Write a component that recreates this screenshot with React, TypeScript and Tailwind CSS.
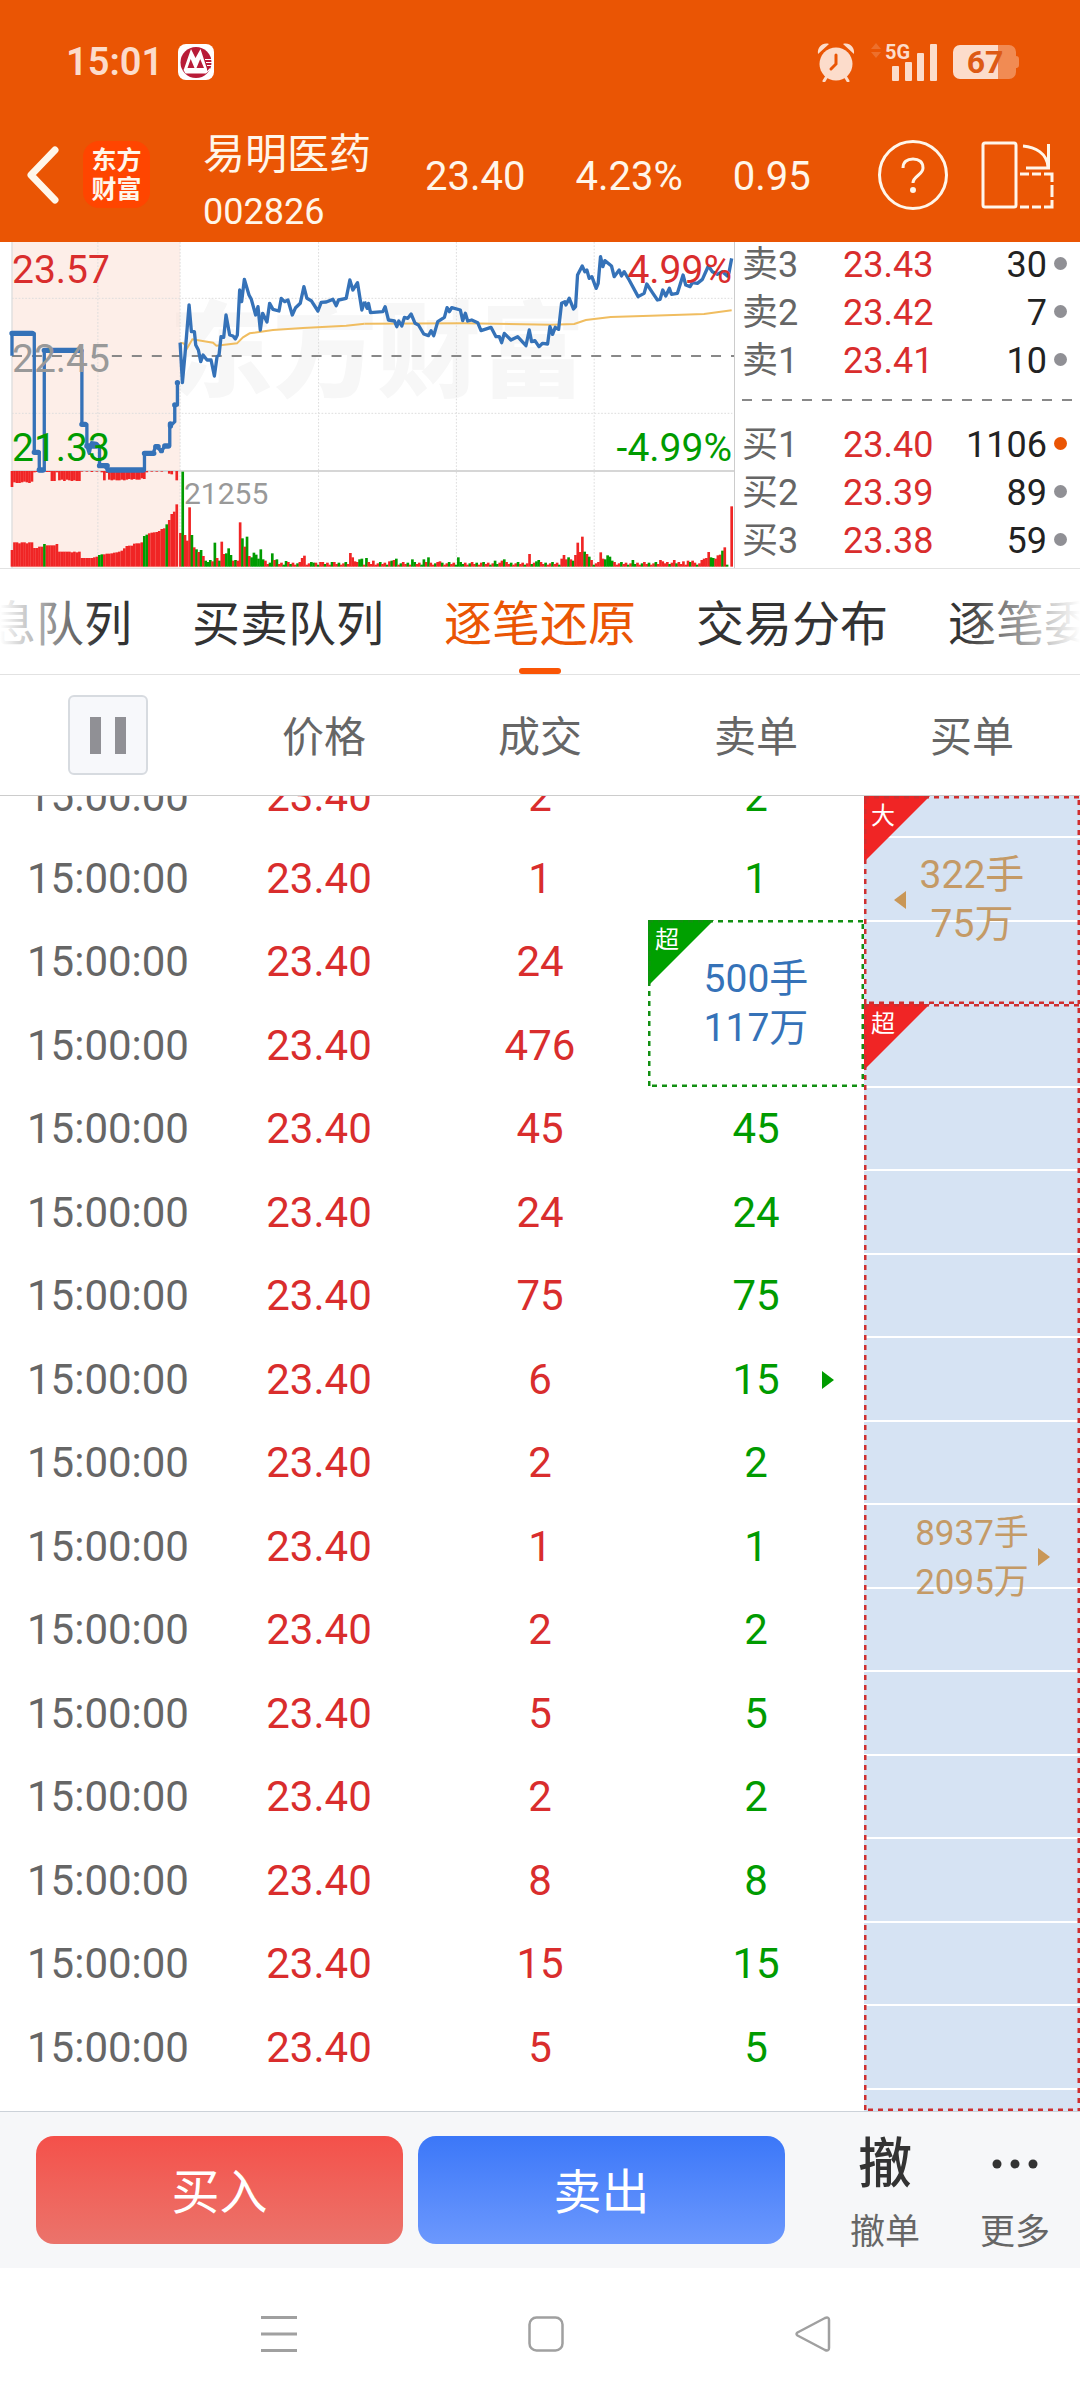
import React from 'react';

type Trade = { deal: number; sell?: number; arrow?: boolean };

const asks = [
    { label: '卖3', price: '23.43', qty: 30 },
    { label: '卖2', price: '23.42', qty: 7 },
    { label: '卖1', price: '23.41', qty: 10 },
];

const bids = [
    { label: '买1', price: '23.40', qty: 1106, hot: true },
    { label: '买2', price: '23.39', qty: 89 },
    { label: '买3', price: '23.38', qty: 59 },
];

const tabs = ['消息队列', '买卖队列', '逐笔还原', '交易分布', '逐笔委托'];

const trades: Trade[] = [
    { deal: 1, sell: 1 },
    { deal: 24 },
    { deal: 476 },
    { deal: 45, sell: 45 },
    { deal: 24, sell: 24 },
    { deal: 75, sell: 75 },
    { deal: 6, sell: 15, arrow: true },
    { deal: 2, sell: 2 },
    { deal: 1, sell: 1 },
    { deal: 2, sell: 2 },
    { deal: 5, sell: 5 },
    { deal: 2, sell: 2 },
    { deal: 8, sell: 8 },
    { deal: 15, sell: 15 },
    { deal: 5, sell: 5 },
];

// Call auction volume, negative values are falling ticks
const auctionVolume = [
    50, 73, 73, 70, 73, 73, 70, 73, 73, 56, 56, 60, 60, -68, 64, 64, 64, 64, 68, 45, 45, 45, 45, 45, 43,
    45, 43, 45, 26, 26, 26, 26, 26, 28, 30, -35, -37, 37, 39, 39, 40, 42, 43, 45, 48, 55, 62, 63, 63, 69,
    70, 70, 73, -92, -96, 100, 102, 103, 104, 107, 113, 115, -127, 140, 158, 165, 187,
];

const auctionUnmatched = [
    48, 34, 36, 36, 34, 32, 34, 36, 32, 4, 3, 0, 3, 0, 3, 3, 30, 30, 4, 28, 26, 30, 26, 28, 30, 28, 30,
    30, 2, 0, 2, 0, 3, 0, 2, 0, 4, 28, 6, 26, 28, 26, 28, 28, 26, 28, 26, 24, 26, 24, 26, 26, 22, 24, 4,
    0, 2, 0, 2, 0, 2, 0, 0, 8, 10, 0, 28,
];

const minuteVolume: Record<number, number> = {
    0: 101, 1: -285, 2: 95, 3: 78, 4: 178, 5: -95, 6: 58, 7: -52, 8: 44, 9: -50, 10: 32, 11: -18, 13: -20,
    14: 16, 15: -72, 16: 26, 17: -18, 18: 75, 19: 38, 20: -40, 21: -55, 22: -35, 23: 18, 24: -20, 25: 18,
    26: 133, 27: -85, 28: 60, 29: -90, 30: 32, 31: -28, 32: -42, 33: -36, 34: -24, 35: -52, 36: -22, 37: 18,
    40: -40, 41: 20, 42: -22, 46: -17, 53: 26, 54: 33, 58: -12, 61: 14, 66: -14, 74: 41, 75: 28, 76: 16,
    78: -22, 79: -24, 81: -26, 84: 18, 91: 16, 92: -18, 93: 20, 94: -24, 101: -22, 106: -22, 108: -28,
    113: 16, 121: -28, 122: -14, 131: 12, 137: -18, 140: 18, 141: -22, 152: 38, 155: -16, 156: -20,
    166: 24, 167: 35, 168: 22, 169: -28, 170: 22, 171: -18, 172: 35, 173: 72, 174: 44, 175: 90, 176: -45,
    177: 38, 178: -30, 179: 20, 183: 43, 184: 24, 185: -22, 186: -34, 187: -30, 188: -18, 189: 14,
    197: -20, 209: 20, 210: 16, 215: 20, 219: 16, 221: 18, 223: 18, 227: 20, 228: 24, 229: 26, 230: 44,
    231: -28, 232: -26, 233: 24, 234: 34, 235: 36, 236: -48, 237: 58, 238: -6, 239: 0, 240: 181,
};

const auctionLine =
    '36,347 36,280 103,280 103,637 118,637 118,692 133,692 133,331 246,331 246,553 261,553 261,618 268,640 275,608 290,610 299,620 299,677 315,680 325,690 434,690 434,640 460,640 468,618 485,634 495,618 510,618 510,560 525,545 525,495 533,495 533,428';
const morningLine =
    '541,308 548,428 556,340 568,195 575,275 584,275 588,315 596,330 603,365 610,345 622,360 634,360 644,408 652,350 658,345 664,290 672,292 679,225 690,285 700,288 707,297 713,285 720,150 726,185 734,118 748,165 755,178 768,225 775,200 782,270 789,220 802,246 810,190 820,208 838,213 845,175 855,185 865,180 878,225 888,203 902,190 913,140 922,175 935,182 955,213 965,187 980,186 1000,178 1010,197 1017,180 1040,175 1051,120 1060,150 1074,128 1087,210 1095,185';
const afternoonLine =
    '0,185 8,205 12,190 18,218 55,215 62,200 72,240 90,243 97,260 103,243 112,258 120,232 130,235 140,222 152,250 162,255 178,282 192,287 200,272 208,287 220,245 240,232 248,203 255,215 262,203 288,210 295,242 303,220 310,243 322,240 340,248 350,272 380,262 395,290 405,290 412,308 420,280 440,300 460,290 485,317 495,270 502,305 512,302 524,320 535,310 550,312 557,260 565,283 573,262 583,268 592,190 602,185 605,195 615,175 628,207 634,200 640,105 654,78 662,95 668,90 675,115 683,110 696,145 702,130 709,50 716,80 722,62 742,78 750,110 765,90 772,108 780,95 795,120 822,170 840,160 848,132 865,158 880,180 888,178 896,150 905,168 916,145 922,163 940,160 957,105 965,135 978,140 985,128 1000,130 1015,118 1033,78 1045,95 1060,103 1075,95 1090,108 1095,98 1103,55';

const tone = (v: number) => (v < 0 ? '#009b00' : '#f02525');

const StatusBar = () => (
    <div className="flex h-[124px] items-center pl-[66px] pr-[61px] text-[#fcdccb]">
        <span className="text-[38px] font-semibold">15:01</span>
        <svg className="ml-[15px] h-9 w-9" viewBox="0 0 36 36">
            <rect width="36" height="36" rx="8" fill="#fff" />
            <circle cx="18" cy="18.5" r="15.5" fill="#b81c38" />
            <path d="M6 25L13 5l4.500 9L22.500 5L29 25v2l3-3v2l-4 3.500H7.500L5.500 26z" fill="#fff" />
            <path d="M9.500 24l3.200-9 3.800 9zM18.500 24l3.700-9 3.800 9z" fill="#b81c38" />
            <path d="M27 15.500h7M28 18.500h6.500M29 21.500h5" stroke="#fff" strokeWidth="1.200" />
        </svg>
        <svg className="ml-auto h-10 w-[38px]" viewBox="0 0 38 40" fill="currentColor">
            <circle cx="19" cy="22" r="16.500" />
            <path d="M1 12C0 5 6 0 12 2z M37 12C38 5 32 0 26 2z" />
            <path d="M10 34l-3 5M28 34l3 5" stroke="currentColor" strokeWidth="3" strokeLinecap="round" />
            <path d="M19 13v9l-5 5" fill="none" stroke="#ea5504" strokeWidth="3" strokeLinecap="round" />
        </svg>
        <div className="relative ml-4 h-10 w-[66px]">
            <svg className="h-10 w-[66px]" viewBox="0 0 66 40" fill="currentColor">
                <path d="M5 1l5 6H0zM5 16l5-6H0z" opacity="0.2" />
                <rect x="21" y="24" width="7" height="15" rx="1" />
                <rect x="34" y="20" width="7" height="19" rx="1" />
                <rect x="46" y="11" width="7" height="28" rx="1" />
                <rect x="59" y="2" width="7" height="37" rx="1" />
            </svg>
            <span className="absolute left-[14px] top-0 text-[20px] leading-5 font-bold">5G</span>
        </div>
        <div className="relative ml-4 h-[34px] w-[66px]">
            <svg className="h-[34px] w-[66px]" viewBox="0 0 66 34" fill="#fcdccb">
                <path d="M45 0H56a7 7 0 0 1 7 7v4a3 3 0 0 1 3 3v6a3 3 0 0 1-3 3v4a7 7 0 0 1-7 7H45z" opacity="0.4" />
                <path d="M45 0H7a7 7 0 0 0-7 7v20a7 7 0 0 0 7 7h38z" />
            </svg>
            <span className="absolute inset-0 pr-0.5 text-center text-[32px] leading-[34px] font-bold text-[#dd5a15]">67</span>
        </div>
    </div>
);

const TitleBar = () => (
    <div className="flex h-[118px] items-center pb-[17px] pl-[27px] pr-[26px] text-[40px] leading-none text-[#fff6ea]">
        <button aria-label="返回">
            <svg className="h-[58px] w-8" viewBox="0 0 32 58" fill="none" stroke="currentColor" strokeWidth="7" strokeLinecap="round" strokeLinejoin="round">
                <path d="M28 4L4 29l24 25" />
            </svg>
        </button>
        <div className="ml-6 flex h-[67px] w-[67px] flex-col items-center justify-center rounded-2xl bg-[#ff4500] text-[25px] leading-[29px] font-bold">
            <span>东方</span>
            <span>财富</span>
        </div>
        <div className="ml-[53px] flex w-[222px] flex-col pt-4">
            <h1 className="text-[42px] leading-[58px]">易明医药</h1>
            <span className="text-[36px] leading-[56px]">002826</span>
        </div>
        <div className="flex gap-[50px] pt-1">
            <span>23.40</span>
            <span>4.23%</span>
            <span>0.95</span>
        </div>
        <button className="ml-auto flex h-[70px] w-[70px] items-center justify-center rounded-full border-3 border-current" aria-label="帮助">
            <svg className="h-9 w-6" viewBox="0 0 24 36" fill="none" stroke="currentColor" strokeWidth="3">
                <path d="M2 11C2 5 6 2 12 2s10 3 10 9c0 7-10 8-10 15" />
                <circle cx="12" cy="33" r="1.500" />
            </svg>
        </button>
        <button className="ml-[33px]" aria-label="横屏">
            <svg className="h-[68px] w-[73px]" viewBox="0 0 73 68" fill="none" stroke="currentColor" strokeWidth="3">
                <rect x="2" y="2" width="33" height="64" rx="2" />
                <path d="M42 5C54 6 66 12 67 26M67.500 3v24H45" />
                <path d="M39 33h9m3 0h9m3 0h8v8m0 3v12m0 3v7h-8m-3 0h-9m-3 0h-9" />
            </svg>
        </button>
    </div>
);

const PriceChart = () => (
    <div className="relative h-[326px] overflow-hidden border-r border-[#ccc] text-[39px] leading-[48px]">
        <div className="absolute left-[169px] top-[52px] text-[104px] leading-[120px] font-black text-[#f7f7f7]">东方财富</div>
        <svg className="absolute inset-0 h-full w-full" viewBox="0 6 2205 978" preserveAspectRatio="none">
            <rect x="36" y="6" width="505" height="978" fill="#fbddd1" fillOpacity="0.5" />
            <path
                d="M294 6V984M541 6V984M957 6V984M1371 6V984M1785 6V984M36 175H2200M36 520H2200"
                fill="none"
                stroke="#ddd"
                strokeWidth="3"
                strokeDasharray="5 5"
            />
            <path d="M36 6V984" stroke="#ddd" strokeWidth="4" />
            <path d="M36 693H2205" stroke="#d6d6d6" strokeWidth="6" />
            <path d="M36 348H2205" stroke="#888" strokeWidth="6" strokeDasharray="30 30" />
            {auctionVolume.map((v, i) => (
                <rect key={i} x={32 + i * 7.5} y={980 - Math.abs(v)} width="8" height={Math.abs(v)} fill={tone(v)} />
            ))}
            {auctionUnmatched.map((v, i) => (
                <rect key={i} x={32 + i * 7.5} y="693" width="8" height={v} fill="#f02525" />
            ))}
            {Array.from({ length: 241 }, (_, i) => {
                const v = minuteVolume[i] ?? (6 + ((i * 7) % 5) * 2) * (i % 3 === 0 ? -1 : 1);
                return <rect key={i} x={538 + i * 6.9} y={980 - Math.abs(v)} width="8" height={Math.abs(v)} fill={tone(v)} />;
            })}
            <g fill="none" stroke="#f0bd60" strokeWidth="6">
                <polyline points="541,308 552,310 562,325 578,298 640,308 650,317 712,310 730,292 750,280 820,270 910,264 1040,257 1095,251" />
                <polyline points="1095,251 1395,250 1655,254 1725,252 1760,240 1835,231 1955,227 2115,222 2198,211" />
            </g>
            <g fill="none" stroke="#3572b8" strokeWidth="10" strokeLinejoin="round">
                <polyline points={auctionLine} />
                <path d="M36 280H97M133 331H243M325 690H430M103 637H115M246 553H256" strokeWidth="16" strokeLinecap="round" />
                <path d="M118 690H128M261 618H290M299 677H322M434 640H462M468 620H475M485 632V632M495 618H506M512 558V552M525 495V495M533 428V428" strokeWidth="16" strokeLinecap="round" />
                <polyline points={morningLine} />
                <polyline points={afternoonLine} transform="translate(1095 0)" />
            </g>
        </svg>
        <span className="absolute left-3 top-1 text-[#d92d2d]">23.57</span>
        <span className="absolute left-3 top-[93px] text-[#999]">22.45</span>
        <span className="absolute left-3 top-[182px] text-[#009b00]">21.33</span>
        <span className="absolute right-0.5 top-1 text-[#d92d2d]">4.99%</span>
        <span className="absolute right-0.5 top-[182px] text-[#009b00]">-4.99%</span>
        <span className="absolute left-[184px] top-[228px] text-[30px] text-[#999]">21255</span>
    </div>
);

const BookRow = ({ label, price, qty, hot }: { label: string; price: string; qty: number; hot?: boolean }) => (
    <li className="flex h-12 items-center pb-0.5 pl-[7px] pr-[13px] text-[36px] leading-[44px]">
        <span className="w-[101px] text-[#666]">{label}</span>
        <span className="text-[#d92d2d]">{price}</span>
        <span className="ml-auto text-[#222]">{qty}</span>
        <span className={`mb-1 ml-[7px] h-[13px] w-[13px] rounded-full ${hot ? 'bg-[#ea5504]' : 'bg-[#909095]'}`} />
    </li>
);

const OrderBook = () => (
    <div>
        <ul>{asks.map((row) => <BookRow key={row.label} {...row} />)}</ul>
        <svg className="block h-9 w-full" aria-hidden="true">
            <line x1="7" x2="338" y1="14" y2="14" stroke="#888" strokeWidth="2" strokeDasharray="10 10" />
        </svg>
        <ul>{bids.map((row) => <BookRow key={row.label} {...row} />)}</ul>
    </div>
);

const Arrow = ({ left, className }: { left?: boolean; className: string }) => (
    <svg className={`absolute h-[18px] w-3 ${className}`} viewBox="0 0 12 18" fill="currentColor">
        <path d={left ? 'M12 0v18L0 9z' : 'M0 0v18l12-9z'} />
    </svg>
);

// Dashed outline and corner flag of a large order
const OrderFrame = ({ color, flag }: { color: string; flag: string }) => (
    <>
        <svg className="absolute inset-0 h-full w-full" aria-hidden="true">
            <path d="M0 0H66L0 66z" fill={color === 'green' ? '#00a000' : '#f02525'} />
            <rect width="100%" height="100%" fill="none" stroke={color === 'green' ? '#128f12' : '#cf2f2f'} strokeWidth="5" strokeDasharray="5 5" />
        </svg>
        <span className="absolute left-[7px] top-[6px] text-[24px] leading-7 text-white">{flag}</span>
    </>
);

const TimeCells = ({ deal }: { deal: number }) => (
    <>
        <td className="text-[#666]">15:00:00</td>
        <td className="pr-2.5 text-[#d92d2d]">23.40</td>
        <td className="text-[#d92d2d]">{deal}</td>
    </>
);

const TradeTable = () => (
    <table className="w-full table-fixed border-separate border-spacing-0 text-center text-[42px] leading-[80px]">
        <thead>
            <tr className="h-[121px] text-[#666]">
                <th className="border-b border-[#ccc] p-0">
                    <button className="mx-auto flex h-20 w-20 items-center justify-center gap-[14px] rounded-md border-2 border-[#d7dbe0] bg-[#f7f8fb]" aria-label="暂停">
                        <span className="h-[37px] w-[11px] bg-[#909095]" />
                        <span className="h-[37px] w-[11px] bg-[#909095]" />
                    </button>
                </th>
                {['价格', '成交', '卖单', '买单'].map((name) => (
                    <th key={name} className="border-b border-[#ccc] p-0 pt-1.5 font-normal">{name}</th>
                ))}
            </tr>
        </thead>
        <tbody>
            {/* Row scrolled halfway under the header */}
            <tr>
                {['15:00:00', '23.40', '2', '2'].map((text, i) => (
                    <td key={i} className={`p-0 ${i === 0 ? 'text-[#666]' : i === 3 ? 'text-[#009b00]' : 'text-[#d92d2d]'}`}>
                        <div className={`flex h-[41px] items-end justify-center overflow-hidden ${i === 1 ? 'pr-2.5' : ''}`}>{text}</div>
                    </td>
                ))}
                <td
                    rowSpan={3}
                    className="relative bg-[#d6e3f3] bg-[linear-gradient(#d6e3f3_40px,#fff_40px,#fff_42px,#d6e3f3_42px,#d6e3f3_124px,#fff_124px,#fff_126px,#d6e3f3_126px)] p-0 text-[39px] leading-[49px] text-[#c49a66]"
                >
                    <OrderFrame color="red" flag="大" />
                    <Arrow left className="left-[30px] top-[95px] text-[#c99757]" />
                    <div className="relative">322手<br />75万</div>
                </td>
            </tr>
            {trades.map((trade, i) => (
                <tr key={i} className="odd:h-[84px] even:h-[83px] [&>td]:py-0 [&>td]:pl-0">
                    <TimeCells deal={trade.deal} />
                    {i === 1 && (
                        <td rowSpan={2} className="relative text-[39px] leading-[49px] text-[#3572b8]">
                            <OrderFrame color="green" flag="超" />
                            <div className="relative">500手<br />117万</div>
                        </td>
                    )}
                    {trade.sell && (
                        <td className="relative text-[#009b00]">
                            {trade.sell}
                            {trade.arrow && <Arrow className="right-[30px] top-[33px]" />}
                        </td>
                    )}
                    {i === 2 && (
                        <td
                            rowSpan={14}
                            className="relative bg-[repeating-linear-gradient(#d6e3f3_0px,#d6e3f3_82px,#fff_82px,#fff_84px,#d6e3f3_84px,#d6e3f3_165px,#fff_165px,#fff_167px)] text-[35px] leading-[49px] text-[#c49a66]"
                        >
                            <OrderFrame color="red" flag="超" />
                            <div className="relative">8937手<br />2095万</div>
                            <Arrow className="right-[30px] top-[544px] text-[#c99757]" />
                        </td>
                    )}
                </tr>
            ))}
            <tr className="h-[22px]">
                <td colSpan={4} className="p-0" />
            </tr>
        </tbody>
    </table>
);

const ActionBar = () => (
    <div className="flex h-[157px] items-center border-t border-[#ccd2d9] bg-[#f6f7f9] pl-9 pr-[29px]">
        <div className="flex flex-1 gap-[15px] text-[48px] text-white">
            <button className="h-[108px] flex-1 rounded-[18px] bg-linear-to-b from-[#f4504a] to-[#eb736b] pt-1.5">买入</button>
            <button className="h-[108px] flex-1 rounded-[18px] bg-linear-to-b from-[#3b77f8] to-[#6c98fd] pt-1.5">卖出</button>
        </div>
        <button className="ml-16 flex w-[72px] flex-col items-center pt-3">
            <span className="text-[54px] leading-[56px] font-medium text-[#333]">撤</span>
            <span className="mt-[18px] text-[35px] leading-[44px] text-[#666]">撤单</span>
        </button>
        <button className="ml-[58px] flex w-[72px] flex-col items-center pt-3">
            <svg className="h-14 w-12" viewBox="0 0 48 56" fill="#333">
                <circle cx="6" cy="27" r="4.500" />
                <circle cx="24" cy="27" r="4.500" />
                <circle cx="42" cy="27" r="4.500" />
            </svg>
            <span className="mt-[18px] text-[35px] leading-[44px] text-[#666]">更多</span>
        </button>
    </div>
);

const NavBar = () => (
    <nav className="flex h-[131px] items-center justify-center gap-[231px] pl-[11px]">
        <button aria-label="菜单">
            <svg className="h-9 w-9" viewBox="0 0 36 36" stroke="#a0a0a0" strokeWidth="3">
                <path d="M0 1.500h36M0 18h36M0 34.500h36" />
            </svg>
        </button>
        <button aria-label="主页">
            <svg className="h-9 w-9" viewBox="0 0 36 36" fill="none" stroke="#a0a0a0" strokeWidth="2.500">
                <rect x="1.500" y="1.500" width="33" height="33" rx="7" />
            </svg>
        </button>
        <button aria-label="后退">
            <svg className="h-9 w-9" viewBox="0 0 36 36" fill="none" stroke="#a0a0a0" strokeWidth="2.500" strokeLinejoin="round">
                <path d="M2.500 16.500L30 2Q34 0.500 34 4V32Q34 35.500 30 34L2.500 19.500Q0.500 18 2.500 16.500z" />
            </svg>
        </button>
    </nav>
);

const App: React.FC = () => {
    return (
        <div className="min-h-screen w-full bg-white font-[Roboto,'Noto_Sans_CJK_SC',sans-serif]">
            <header className="bg-[#ea5504]">
                <StatusBar />
                <TitleBar />
            </header>

            <section className="grid grid-cols-[735fr_345fr] border-b border-[#e2e2e2]">
                <PriceChart />
                <OrderBook />
            </section>

            <div className="relative flex h-[106px] justify-center gap-[60px] overflow-hidden border-b border-[#e2e2e2] text-[48px]">
                {tabs.map((tab) => (
                    <button
                        key={tab}
                        className={`flex shrink-0 flex-col items-center justify-between pt-5 leading-[72px] ${tab === '逐笔还原' ? 'text-[#ea5504]' : 'text-[#333]'}`}
                    >
                        {tab}
                        {tab === '逐笔还原' && <span className="h-1.5 w-[42px] rounded-full bg-[#fa5505]" />}
                    </button>
                ))}
                <div className="pointer-events-none absolute inset-y-0 left-0 w-[100px] bg-linear-to-r from-white to-white/0" />
                <div className="pointer-events-none absolute inset-y-0 right-0 w-[120px] bg-linear-to-l from-white to-white/0" />
            </div>

            <TradeTable />
            <ActionBar />
            <NavBar />
        </div>
    );
};

export default App;
